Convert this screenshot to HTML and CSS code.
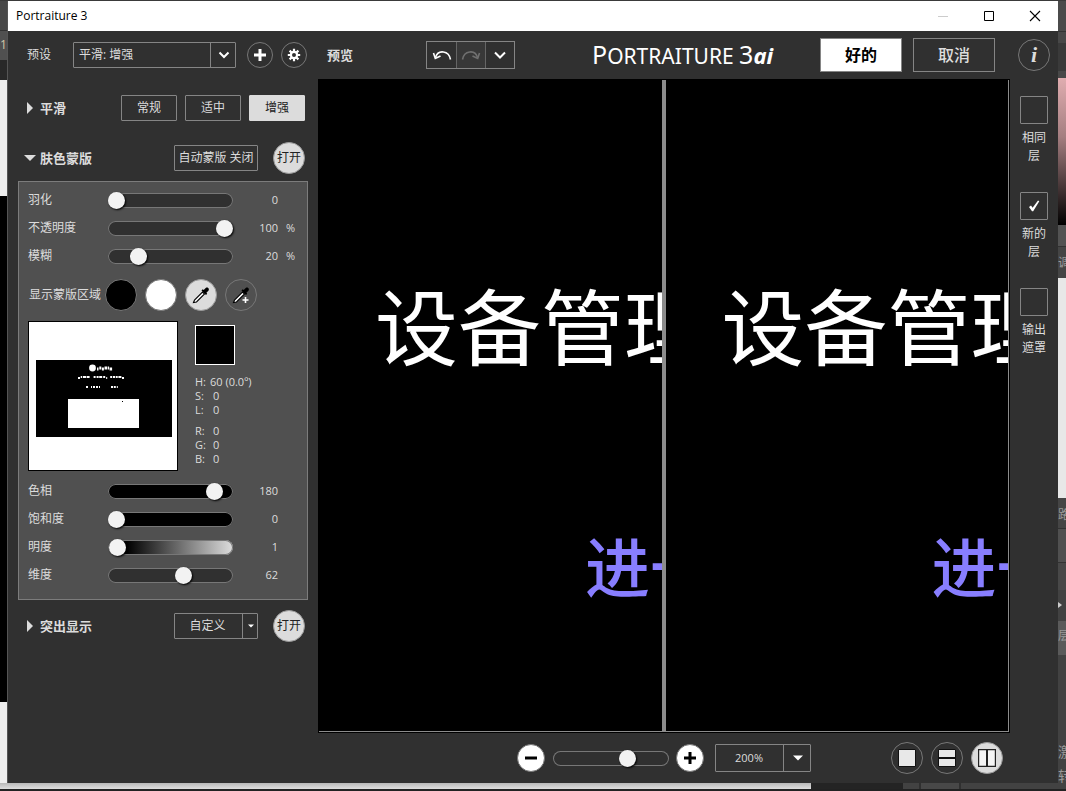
FILE: index.html
```html
<!DOCTYPE html>
<html lang="zh-CN">
<head>
<meta charset="utf-8">
<title>Portraiture 3</title>
<link rel="stylesheet" href="styles.css">
</head>
<body>
<div class="desktop">
  <div class="host host-left"><span class="host-tab">1.</span></div>

  <div class="window">
    <div class="titlebar">
      <span class="titlebar-text">Portraiture 3</span>
      <div class="window-controls">
        <button class="window-control dim" aria-label="最小化" disabled><svg width="12" height="12" viewBox="0 0 12 12"><path d="M1 6.5h10" stroke="currentColor"/></svg></button>
        <button class="window-control" aria-label="最大化"><svg width="12" height="12" viewBox="0 0 12 12"><path d="M1.5 1.5h9v9h-9z" fill="none" stroke="currentColor"/></svg></button>
        <button class="window-control" aria-label="关闭"><svg width="12" height="12" viewBox="0 0 12 12"><path d="M1 1l10 10M11 1L1 11" stroke="currentColor" stroke-width="1.1"/></svg></button>
      </div>
    </div>

    <div class="content">
      <aside class="sidebar">
        <div class="preset-row">
          <label class="preset-label" for="preset">预设</label>
          <div class="select preset-select">
            <select id="preset"><option>平滑: 增强</option></select>
            <span class="select-arrow"><svg width="12" height="8" viewBox="0 0 12 8"><path d="M1.5 1.5L6 6l4.500-4.500" fill="none" stroke="currentColor" stroke-width="2"/></svg></span>
          </div>
          <button class="round small" aria-label="添加预设"><svg width="14" height="14" viewBox="0 0 14 14"><path d="M7 1v12M1 7h12" stroke="currentColor" stroke-width="3"/></svg></button>
          <button class="round small last" aria-label="设置"><svg width="14" height="14" viewBox="0 0 14 14"><g stroke="currentColor" stroke-width="2.200"><path d="M7 .8v3M7 10.200v3M.8 7h3M10.200 7h3M2.600 2.600l2.200 2.200M9.200 9.200l2.200 2.200M2.600 11.400l2.200-2.200M9.200 4.800l2.200-2.200"/><circle cx="7" cy="7" r="3.100" fill="none"/></g></svg></button>
        </div>

        <div class="section-row smooth-row">
          <button class="section-title"><svg width="12" height="12" viewBox="0 0 12 12"><path d="M3 0l6 6-6 6z" fill="currentColor"/></svg>平滑</button>
          <div class="levels">
            <button class="box">常规</button>
            <button class="box">适中</button>
            <button class="box on">增强</button>
          </div>
        </div>

        <div class="section-row mask-title-row">
          <button class="section-title"><svg width="12" height="12" viewBox="0 0 12 12"><path d="M0 3h12L6 9z" fill="currentColor"/></svg>肤色蒙版</button>
          <button class="box wide">自动蒙版 关闭</button>
          <button class="round on toggle">打开</button>
        </div>

        <div class="panel">
          <div class="slider-row"><label for="feather">羽化</label><input id="feather" type="range" min="0" max="100" value="0"><output>0</output></div>
          <div class="slider-row"><label for="opacity">不透明度</label><input id="opacity" type="range" min="0" max="100" value="100"><output>100</output><span class="unit">%</span></div>
          <div class="slider-row"><label for="blur">模糊</label><input id="blur" type="range" min="0" max="100" value="20"><output>20</output><span class="unit">%</span></div>

          <div class="mask-row">
            <span class="mask-label">显示蒙版区域</span>
            <button class="round black" aria-label="黑色"></button>
            <button class="round white" aria-label="白色"></button>
            <button class="round on" aria-label="吸管"><svg width="20" height="20" viewBox="0 0 20 20"><path d="M2.500 17.500l1-2.500 8-8 2 2-8 8z" fill="#fff" stroke="#000" stroke-width="1.100"/><path d="M10.500 5.500l4.500 4.500 1.200-1.200-.8-1 2-2c1.600-1.800-.9-4.300-2.700-2.700l-2 2-1-.8z" fill="#000"/></svg></button>
            <button class="round" aria-label="增加吸管"><svg width="20" height="20" viewBox="0 0 20 20"><path d="M2.500 17.500l1-2.500 8-8 2 2-8 8z" fill="#fff" stroke="#000" stroke-width="1.100"/><path d="M10.500 5.500l4.500 4.500 1.200-1.200-.8-1 2-2c1.600-1.800-.9-4.300-2.700-2.700l-2 2-1-.8z" fill="#000"/><path d="M14.500 12v6M11.500 15h6" stroke="#fff" stroke-width="1.600"/></svg></button>
          </div>

          <div class="sample-row">
            <svg class="mask-preview" viewBox="0 0 148 148" role="img" aria-label="蒙版预览">
              <rect width="148" height="148" fill="#fff"/>
              <rect x="7" y="38" width="136" height="77" fill="#000"/>
              <rect x="39" y="77" width="71" height="29" fill="#fff"/>
              <circle cx="63.500" cy="46" r="3.400" fill="#fff"/>
              <path d="M68 47h1.500m.8-1h2m.6 1h2m.6-1h2.500m.6 0h1.500m.5 1h2.500" stroke="#fff" stroke-width="3"/>
              <path d="M49 56h2m.7-1h1.500m.8 0h3m.6 0h3m4 0h2m1 0h2m.6 0h3m1 0h2m1 1h1m3-1h2m.8 0h2m.7 0h2m.7 0h3m.6 1h2" stroke="#fff" stroke-width="2"/>
              <path d="M57 65h2m3 0h1m1 0h2m1 0h2m1 0h1m11 0h2m.8 0h2m1 0h1" stroke="#fff" stroke-width="2"/>
              <rect x="93" y="79" width="1" height="1" fill="#000"/>
            </svg>
            <div class="sample">
              <div class="swatch"></div>
              <dl class="readout">
                <dt>H:</dt><dd>60 (0.0º)</dd>
                <dt>S:</dt><dd class="short">0</dd>
                <dt>L:</dt><dd class="short">0</dd>
              </dl>
              <dl class="readout">
                <dt>R:</dt><dd class="short">0</dd>
                <dt>G:</dt><dd class="short">0</dd>
                <dt>B:</dt><dd class="short">0</dd>
              </dl>
            </div>
          </div>

          <div class="slider-row"><label for="hue">色相</label><input id="hue" class="solid" type="range" min="0" max="198" value="180"><output>180</output></div>
          <div class="slider-row"><label for="saturation">饱和度</label><input id="saturation" class="solid" type="range" min="0" max="100" value="0"><output>0</output></div>
          <div class="slider-row"><label for="lightness">明度</label><input id="lightness" class="ramp" type="range" min="0" max="100" value="1"><output>1</output></div>
          <div class="slider-row"><label for="latitude">维度</label><input id="latitude" type="range" min="0" max="100" value="62"><output>62</output></div>
        </div>

        <div class="section-row highlight-row">
          <button class="section-title"><svg width="12" height="12" viewBox="0 0 12 12"><path d="M3 0l6 6-6 6z" fill="currentColor"/></svg>突出显示</button>
          <div class="select custom-select">
            <select aria-label="突出显示"><option>自定义</option></select>
            <span class="select-arrow"><svg width="6" height="4" viewBox="0 0 6 4"><path d="M0 .5h6L3 3.500z" fill="currentColor"/></svg></span>
          </div>
          <button class="round on toggle">打开</button>
        </div>
      </aside>

      <main class="workspace">
        <header class="toolbar">
          <h2 class="preview-title">预览</h2>
          <div class="history">
            <button aria-label="撤销"><svg width="20" height="14" viewBox="0 0 20 14"><path d="M18.500 11.500C17 2.500 6 1 3.500 9.500" fill="none" stroke="currentColor" stroke-width="1.600"/><path d="M1.500 5l1.800 5.500L8.500 8" fill="none" stroke="currentColor" stroke-width="1.600"/></svg></button>
            <button class="off" aria-label="重做" disabled><svg width="20" height="14" viewBox="0 0 20 14"><path d="M1.500 11.500C3 2.500 14 1 16.500 9.500" fill="none" stroke="currentColor" stroke-width="1.600"/><path d="M18.500 5l-1.800 5.500L11.500 8" fill="none" stroke="currentColor" stroke-width="1.600"/></svg></button>
            <button aria-label="历史记录"><svg width="12" height="8" viewBox="0 0 12 8"><path d="M1 1.500L6 6.500l5-5" fill="none" stroke="currentColor" stroke-width="2"/></svg></button>
          </div>
          <h1 class="brand"><span class="brand-cap">P</span>ORTRAITURE <span class="brand-cap">3<b>ai</b></span></h1>
          <div class="actions">
            <button class="action primary">好的</button>
            <button class="action">取消</button>
          </div>
          <button class="round info" aria-label="信息">i</button>
        </header>

        <div class="stage">
          <div class="canvas">
            <div class="pane"><p class="pane-heading">设备管理</p><p class="pane-link">进一步</p></div>
            <div class="pane"><p class="pane-heading">设备管理</p><p class="pane-link">进一步</p></div>
          </div>
          <div class="outputs">
            <label class="output-option"><input type="checkbox"><span>相同层</span></label>
            <label class="output-option"><span class="tick"><input type="checkbox" checked><svg width="14" height="14" viewBox="0 0 14 14"><path d="M2 8l2-1.500 1.600 2.200L11 1.500l1.300.8L6.200 12.200H5z" fill="currentColor"/></svg></span><span>新的层</span></label>
            <label class="output-option"><input type="checkbox"><span>输出遮罩</span></label>
          </div>
        </div>

        <footer class="zoombar">
          <button class="round zoom" aria-label="缩小"><svg width="14" height="14" viewBox="0 0 14 14"><path d="M1 7h12" stroke="currentColor" stroke-width="3"/></svg></button>
          <input class="zoom-slider" type="range" min="0" max="300" value="200" aria-label="缩放">
          <button class="round zoom" aria-label="放大"><svg width="14" height="14" viewBox="0 0 14 14"><path d="M7 1v12M1 7h12" stroke="currentColor" stroke-width="3"/></svg></button>
          <div class="select zoom-select">
            <select aria-label="缩放比例"><option>200%</option></select>
            <span class="select-arrow"><svg width="10" height="6" viewBox="0 0 10 6"><path d="M0 .5h10L5 5.500z" fill="currentColor"/></svg></span>
          </div>
          <div class="views">
            <button class="round" aria-label="单一视图"><svg width="18" height="18" viewBox="0 0 18 18"><path d="M.5.5h17v17H.5z" fill="#e8e8e8" stroke="#111"/></svg></button>
            <button class="round" aria-label="上下视图"><svg width="18" height="18" viewBox="0 0 18 18"><path d="M.5.5h17v17H.5z" fill="#e8e8e8" stroke="#111"/><path d="M0 9h18" stroke="#111" stroke-width="2"/></svg></button>
            <button class="round on" aria-label="左右视图"><svg width="18" height="18" viewBox="0 0 18 18"><path d="M.5.5h17v17H.5z" fill="#f4f4f4" stroke="#222" stroke-width="1.400"/><path d="M9 0v18" stroke="#222" stroke-width="2"/></svg></button>
          </div>
        </footer>
      </main>
    </div>
  </div>

  <div class="host host-right">
    <div class="host-block top"></div>
    <div class="host-block color"></div>
    <div class="host-block tabs">调</div>
    <div class="host-block page"></div>
    <div class="host-block path">路</div>
    <div class="host-block layer"><svg width="4" height="6" viewBox="0 0 4 6"><path d="M0 0l4 3-4 3z" fill="#ccc"/></svg></div>
    <div class="host-block active">层</div>
    <div class="host-block notes"><span>激</span><span>转</span></div>
  </div>

  <div class="host-bottom"><div class="host-scroll"></div><div class="host-dock"></div></div>
</div>
</body>
</html>
```
FILE: styles.css
```css
* { box-sizing: border-box; }

body {
  margin: 0;
  color: #dcdcdc;
  font: 12px/18px "Open Sans", "Noto Sans CJK SC", sans-serif;
}

button, select, input { margin: 0; font: inherit; color: inherit; }
button { padding: 0; border: 0; background: none; white-space: nowrap; }
svg { display: block; flex: none; }
h1, h2, p, dl, dd { margin: 0; }

/* Host application around the dialog */
.desktop {
  display: grid;
  grid-template-columns: 8px minmax(0, 1fr) 8px;
  grid-template-rows: minmax(0, 1fr) 8px;
  height: 100vh;
  min-height: 700px;
  padding-top: 1px;
  overflow: hidden;
  background: #3a3a3a;
}
.host { overflow: hidden; }
.host-left {
  padding-top: 35px;
  border-right: 1px solid #555;
  background: linear-gradient(#484848 29px, #333 29px 30px, #505050 30px 59px, #282828 59px 79px, #eee 79px 195px, #000 195px 701px, #eee 701px);
}
.host-tab { color: #d0c8a8; }
.host-right {
  display: flex;
  flex-direction: column;
  color: #999;
  background: #424242;
}
.host-block { flex: none; overflow: hidden; white-space: nowrap; }
.top { height: 77px; background: linear-gradient(#4b4b4b 30px, #333 30px 31px, #484848 31px 42px, #3a3a3a 42px 70px, #484848 70px); }
.color { height: 147px; background: linear-gradient(#e0adb0, #a47e80 40%, #000); }
.tabs { height: 53px; padding-top: 29px; background: linear-gradient(#535353 21px, #333 21px 22px, #454545 22px); }
.page { height: 220px; background: #e8e8e8; }
.path { height: 92px; padding-top: 8px; background: linear-gradient(#454545 30px, #333 30px 31px, #505050 31px 64px, #333 64px 65px, #484848 65px); }
.layer { height: 31px; padding-top: 12px; background: #424242; }
.active { height: 34px; padding-top: 6px; background: #5a5a5a; }
.notes { display: flex; flex-direction: column; gap: 6px; padding-top: 88px; font-size: 14px; }
.host-bottom {
  grid-column: 1 / -1;
  display: flex;
  border-bottom: 2px solid #222;
  background: #424242;
}
.host-scroll { flex: 811; background: linear-gradient(#b8b8b8, #dedede); }
.host-dock { flex: 255; background: linear-gradient(90deg, #242424 92px, #424242 92px 108px, #303030 108px 110px, #484848 110px 148px, #303030 148px 150px, #424242 150px); }

/* Dialog */
.window {
  display: flex;
  flex-direction: column;
  min-width: 0;
  background: #303030;
}
.titlebar {
  display: flex;
  justify-content: space-between;
  flex: none;
  height: 30px;
  padding-left: 8px;
  color: #000;
  background: #fff;
}
.titlebar-text { line-height: 30px; }
.window-controls { display: flex; }
.window-control { display: grid; place-items: center; width: 46px; }
.dim { color: #ccc; }
.content { display: flex; flex: 1; min-height: 0; }

/* Shared controls */
.box {
  height: 26px;
  border: 1px solid #858585;
  border-radius: 1px;
}
.box.on { border-color: #dcdcdc; background: #dcdcdc; color: #222; }
.round {
  display: grid;
  place-items: center;
  flex: none;
  width: 32px;
  height: 32px;
  border: 1px solid #777;
  border-radius: 50%;
}
.round.on { border-color: #999; background: #dcdcdc; color: #222; }
.round.small { width: 26px; height: 26px; color: #fff; }

.select { position: relative; flex: none; }
.select select {
  width: 100%;
  height: 26px;
  padding: 0 5px;
  border: 1px solid #858585;
  border-radius: 1px;
  appearance: none;
  background: transparent;
}
.select-arrow {
  position: absolute;
  top: 0;
  right: 0;
  bottom: 0;
  display: grid;
  place-items: center;
  width: 26px;
  border-left: 1px solid #858585;
  color: #fff;
  pointer-events: none;
}

input[type="range"] {
  flex: none;
  width: 125px;
  height: 15px;
  border-radius: 8px;
  appearance: none;
  background: #303030;
  box-shadow: inset 0 0 0 1px #777;
}
input[type="range"]::-webkit-slider-thumb {
  width: 17px;
  height: 17px;
  border-radius: 50%;
  appearance: none;
  background: #f2f2f2;
  box-shadow: 1px 1px 2px #000;
}
input[type="range"].solid { background: #000; }
input[type="range"].ramp { background: linear-gradient(90deg, #000 15%, #ddd); }

/* Sidebar */
.sidebar { flex: none; width: 310px; }
.preset-row {
  display: flex;
  align-items: center;
  height: 47px;
  padding: 0 11px 0 19px;
}
.preset-label { width: 46px; }
.preset-select { width: 163px; }
.preset-row .round { margin-left: 11px; }
.preset-row .last { margin-left: 8px; }

.section-row {
  display: flex;
  align-items: center;
  height: 45px;
  padding: 0 13px 0 16px;
}
.smooth-row { height: 58px; padding-top: 2px; }
.mask-title-row { padding-bottom: 1px; }
.highlight-row { height: 52px; }
.section-title {
  display: flex;
  align-items: center;
  gap: 4px;
  margin-right: auto;
  font-size: 13px;
  font-weight: 700;
}
.levels { display: flex; gap: 8px; }
.levels .box { width: 56px; }
.wide, .custom-select { width: 84px; }
.custom-select select { padding: 0 17px 0 0; text-align: center; text-align-last: center; }
.custom-select .select-arrow { width: 16px; }
.toggle { margin-left: 15px; }

.panel {
  margin: 0 10px;
  padding: 4px 9px 10px;
  border: 1px solid #7c7c7c;
  background: #505050;
}
.slider-row { display: flex; align-items: center; height: 28px; }
.slider-row label { width: 80px; }
.slider-row output { width: 45px; font-size: 11px; text-align: right; }
.unit { margin-left: 8px; font-size: 11px; }
.mask-row { display: flex; align-items: center; gap: 8px; height: 51px; padding: 0 0 2px 1px; }
.mask-label { width: 68px; white-space: nowrap; }
.black { background: #000; }
.white { background: #fff; }
.sample-row { display: flex; gap: 17px; margin-bottom: 6px; }
.mask-preview { width: 150px; height: 150px; border: 1px solid #000; }
.sample { padding-top: 4px; }
.swatch { width: 40px; height: 40px; margin-bottom: 10px; border: 1px solid #fff; background: #000; }
.readout {
  display: grid;
  grid-template-columns: 15px auto;
  margin-bottom: 7px;
  font-size: 11px;
  line-height: 14px;
}
.readout:last-child { margin-bottom: 0; }
.short { padding-left: 3px; }

/* Preview workspace */
.workspace { display: flex; flex: 1; flex-direction: column; min-width: 0; }
.toolbar {
  display: flex;
  align-items: center;
  flex: none;
  height: 48px;
  padding: 0 8px 0 9px;
}
.preview-title { width: 99px; font-size: 13px; line-height: 18px; }
.history { display: flex; height: 28px; border: 1px solid #858585; }
.history button { display: grid; place-items: center; width: 29px; color: #fff; }
.history button + button { border-left: 1px solid #666; }
.history .off { background: #383838; color: #707070; }
.brand {
  margin-left: 77px;
  color: #fff;
  font: 400 21px/30px "Noto Sans", sans-serif;
  white-space: nowrap;
}
.brand-cap { font-size: 25px; }
.brand b { font-size: 22px; font-style: italic; }
.actions { display: flex; gap: 11px; margin-left: auto; }
.action {
  width: 82px;
  height: 34px;
  border: 1px solid #858585;
  font-size: 16px;
  font-weight: 500;
}
.primary { background: #fff; color: #000; font-weight: 700; }
.info { margin-left: 23px; font: italic 700 22px/28px "Liberation Serif", serif; }

.stage { display: flex; flex: 1; min-height: 0; }
.canvas {
  display: grid;
  grid-template-columns: 1fr 1fr;
  gap: 4px;
  flex: 1;
  min-width: 0;
  padding: 0 1px 1px 0;
  border: 1px solid #000;
  background: #8c8c8c;
}
.pane {
  min-width: 0;
  padding-top: 184px;
  overflow: hidden;
  background: #000;
  color: #fff;
  white-space: nowrap;
}
.pane-heading { margin: 0 0 142px 56px; font: 400 83px/118px "Noto Sans CJK SC", sans-serif; }
.pane-link { margin-left: 266px; color: #887eff; font: 500 65px/80px "Noto Sans CJK SC", sans-serif; }

.outputs {
  display: flex;
  flex-direction: column;
  align-items: center;
  gap: 27px;
  flex: none;
  width: 48px;
  padding-top: 17px;
}
.output-option {
  display: flex;
  flex-direction: column;
  align-items: center;
  gap: 5px;
  width: 28px;
  text-align: center;
}
.output-option input {
  display: block;
  width: 28px;
  height: 28px;
  border: 1px solid #858585;
  border-radius: 1px;
  appearance: none;
}
.tick { position: relative; color: #fff; }
.tick svg { position: absolute; inset: 7px; }

.zoombar {
  display: flex;
  align-items: center;
  flex: none;
  height: 50px;
  padding: 0 55px 0 199px;
}
.zoom { width: 28px; height: 28px; background: #fff; color: #000; }
.zoombar .zoom-slider { width: 116px; margin: 0 7px 0 8px; }
.zoom-select { width: 96px; margin-left: 11px; font-size: 11px; }
.zoom-select select { height: 28px; padding: 0 28px 0 0; text-align: center; text-align-last: center; }
.zoom-select .select-arrow { width: 28px; }
.views { display: flex; gap: 8px; margin-left: auto; }
```
